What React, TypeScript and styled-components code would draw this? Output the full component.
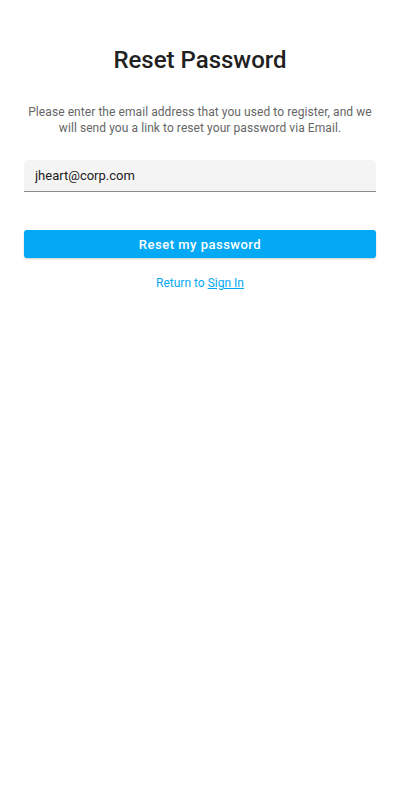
import React from "react";
import styled, { createGlobalStyle } from "styled-components";

const Global = createGlobalStyle`
  html, body { margin: 0; padding: 0; background: #fff; }
  body { font-family: Roboto, "Noto Sans", sans-serif; }
`;

const Page = styled.div`
  width: 400px;
  box-sizing: border-box;
  padding: 44px 24px 0;
  display: flex;
  flex-direction: column;
  align-items: stretch;
`;

const Title = styled.h1`
  margin: 0;
  font-size: 24px;
  font-weight: 500;
  line-height: 32px;
  color: #212121;
  text-align: center;
`;

const Description = styled.p`
  margin: 28px 0 0;
  font-size: 12px;
  line-height: 16px;
  letter-spacing: 0.07px;
  color: #666;
  text-align: center;
`;

const Field = styled.div`
  margin-top: 24px;
  height: 31px;
  background: #f4f4f4;
  border-radius: 4px 4px 0 0;
  border-bottom: 1px solid #8a8a8a;
  display: flex;
  align-items: center;
  padding: 0 11px;
`;

const Input = styled.input`
  border: 0;
  outline: none;
  background: transparent;
  padding: 0;
  width: 100%;
  font-family: Roboto, sans-serif;
  font-size: 13px;
  color: #212121;
`;

const Button = styled.button`
  margin-top: 38px;
  height: 28px;
  border: 0;
  border-radius: 3px;
  background: #03a9f4;
  color: #fff;
  font-family: Roboto, sans-serif;
  font-size: 13px;
  font-weight: 500;
  letter-spacing: 0.5px;
  box-shadow: 0 1px 2px rgba(0, 0, 0, 0.2);
  cursor: pointer;
`;

const Footer = styled.div`
  margin-top: 17px;
  text-align: center;
  font-size: 12px;
  line-height: 16px;
  color: #03a9f4;
`;

const Link = styled.a`
  color: #03a9f4;
  text-decoration: underline;
`;

export default function App() {
  return (
    <>
      <Global />
      <Page>
        <Title>Reset Password</Title>
        <Description>
          Please enter the email address that you used to register, and we will send you a link to reset your password via Email.
        </Description>
        <Field>
          <Input defaultValue="jheart@corp.com" />
        </Field>
        <Button>Reset my password</Button>
        <Footer>
          Return to <Link href="#">Sign In</Link>
        </Footer>
      </Page>
    </>
  );
}
